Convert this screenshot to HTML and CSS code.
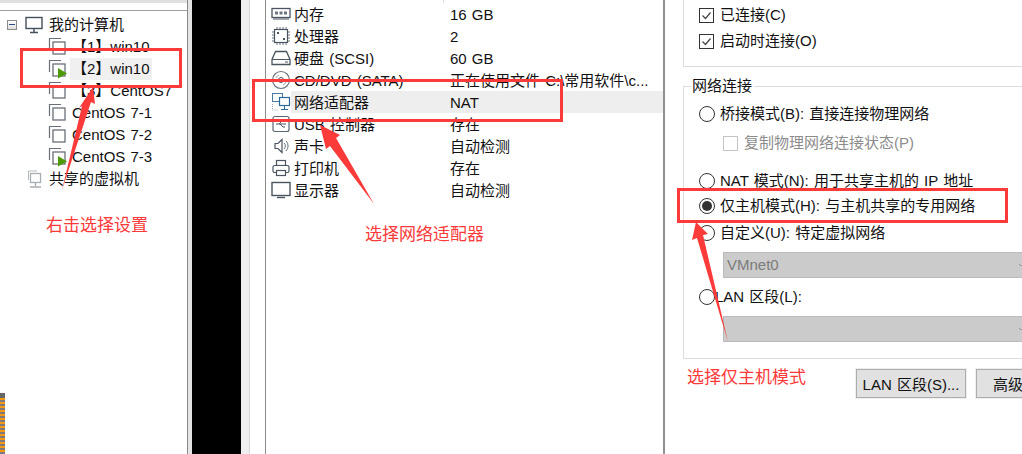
FILE: index.html
```html
<!DOCTYPE html>
<html lang="zh-CN">
<head>
    <meta charset="UTF-8">
    <title>虚拟机设置</title>
    <link rel="stylesheet" href="styles.css">
</head>
<body>
    <div class="page">
        <div class="library">
            <div class="library-top"></div>
            <ul class="tree">
                <li class="tree-row tree-root">
                    <span class="expander"></span>
                    <svg class="tree-icon" width="18" height="18" viewBox="0 0 18 18"><rect x="1" y="1.500" width="16" height="11" fill="#fff" stroke="#44505c" stroke-width="1.400"/><path d="M9 13v3M5 16.500h8" stroke="#44505c" stroke-width="1.400" fill="none"/></svg>
                    <span>我的计算机</span>
                </li>
                <li class="tree-row tree-vm">
                    <svg class="vm-icon" width="20" height="20" viewBox="0 0 20 20"><path d="M1.500 13V1.500H13" class="vm-back"/><rect x="5" y="5" width="12" height="12" class="vm-front"/></svg>
                    <span class="vm-name">【1】win10</span>
                </li>
                <li class="tree-row tree-vm">
                    <svg class="vm-icon" width="20" height="20" viewBox="0 0 20 20"><path d="M1.500 13V1.500H13" class="vm-back"/><rect x="5" y="5" width="12" height="12" class="vm-front"/><path d="M10 9l9 5.500-9 5z" fill="#4e9a06"/></svg>
                    <span class="vm-name vm-selected">【2】win10</span>
                </li>
                <li class="tree-row tree-vm">
                    <svg class="vm-icon" width="20" height="20" viewBox="0 0 20 20"><path d="M1.500 13V1.500H13" class="vm-back"/><rect x="5" y="5" width="12" height="12" class="vm-front"/></svg>
                    <span class="vm-name">【3】CentOS7</span>
                </li>
                <li class="tree-row tree-vm">
                    <svg class="vm-icon" width="20" height="20" viewBox="0 0 20 20"><path d="M1.500 13V1.500H13" class="vm-back"/><rect x="5" y="5" width="12" height="12" class="vm-front"/></svg>
                    <span class="vm-name">CentOS 7-1</span>
                </li>
                <li class="tree-row tree-vm">
                    <svg class="vm-icon" width="20" height="20" viewBox="0 0 20 20"><path d="M1.500 13V1.500H13" class="vm-back"/><rect x="5" y="5" width="12" height="12" class="vm-front"/></svg>
                    <span class="vm-name">CentOS 7-2</span>
                </li>
                <li class="tree-row tree-vm">
                    <svg class="vm-icon" width="20" height="20" viewBox="0 0 20 20"><path d="M1.500 13V1.500H13" class="vm-back"/><rect x="5" y="5" width="12" height="12" class="vm-front"/><path d="M10 9l9 5.500-9 5z" fill="#4e9a06"/></svg>
                    <span class="vm-name">CentOS 7-3</span>
                </li>
                <li class="tree-row tree-shared">
                    <svg class="tree-icon" width="16" height="18" viewBox="0 0 16 18"><path d="M1.500 10V1H10" fill="none" stroke="#b5b9bd"/><rect x="3.500" y="3.500" width="10" height="9" fill="#fff" stroke="#a8adb2" stroke-width="1.300"/><path d="M8.500 13v3M3 17h11" stroke="#a8adb2" stroke-width="1.300" fill="none"/></svg>
                    <span>共享的虚拟机</span>
                </li>
            </ul>
            <div class="taskbar-stub"></div>
        </div>

        <div class="black-gap"></div>

        <div class="devices">
            <div class="device-list">
                <div class="device-head"></div>
                <div class="device-row">
                    <svg class="device-icon" width="20" height="18" viewBox="0 0 20 18"><rect x="1" y="3.500" width="18" height="9" fill="#fff" stroke="#4a5560" stroke-width="1.300"/><path d="M4 6.500h3v3H4zM8.500 6.500h3v3h-3zM13 6.500h3v3h-3z" fill="#6a7580"/><path d="M2 14h16" stroke="#4a5560"/></svg>
                    <span class="device-name">内存</span><span class="device-value">16 GB</span>
                </div>
                <div class="device-row">
                    <svg class="device-icon" width="20" height="20" viewBox="0 0 20 20"><rect x="3.500" y="3.500" width="13" height="13" fill="#fff" stroke="#4a5560" stroke-width="1.200"/><path d="M6 1v2M9 1v2M12 1v2M15 1v2M6 17v2M9 17v2M12 17v2M15 17v2M1 6h2M1 9h2M1 12h2M1 15h2M17 6h2M17 9h2M17 12h2M17 15h2" stroke="#6a7580"/><rect x="6" y="6" width="2" height="2" fill="#4a5560"/><rect x="12" y="12" width="2" height="2" fill="#4a5560"/></svg>
                    <span class="device-name">处理器</span><span class="device-value">2</span>
                </div>
                <div class="device-row">
                    <svg class="device-icon" width="20" height="18" viewBox="0 0 20 18"><path d="M4.500 2.500h11l3.500 8v5H1v-5z" fill="#fff" stroke="#4a5560" stroke-width="1.300"/><path d="M1 10.500h18" stroke="#4a5560"/><path d="M14 13h3" stroke="#4a5560"/></svg>
                    <span class="device-name">硬盘 (SCSI)</span><span class="device-value">60 GB</span>
                </div>
                <div class="device-row">
                    <svg class="device-icon" width="20" height="20" viewBox="0 0 20 20"><circle cx="10" cy="10" r="8.500" fill="#fff" stroke="#6a7580" stroke-width="1.200"/><circle cx="10" cy="10" r="2.500" fill="none" stroke="#4a5560"/><path d="M5 8a5.500 5.500 0 0 1 3-3M15 12a5.500 5.500 0 0 1-3 3" stroke="#9aa2aa" fill="none"/></svg>
                    <span class="device-name">CD/DVD (SATA)</span><span class="device-value">正在使用文件 C:\常用软件\c...</span>
                </div>
                <div class="device-row device-selected">
                    <svg class="device-icon" width="20" height="20" viewBox="0 0 20 20"><rect x="1.500" y="1.500" width="10" height="8" fill="#fff" stroke="#4a7aa0"/><rect x="8.500" y="5.500" width="10" height="8" fill="#fff" stroke="#2a6a9a" stroke-width="1.200"/><path d="M13.500 14v3M10 17.500h7" stroke="#2a6a9a"/><path d="M1.500 12v6h6" stroke="#9aa2aa" stroke-dasharray="1 1" fill="none"/></svg>
                    <span class="device-name">网络适配器</span><span class="device-value">NAT</span>
                </div>
                <div class="device-row">
                    <svg class="device-icon" width="20" height="20" viewBox="0 0 20 20"><rect x="2" y="2.500" width="16" height="15" rx="2" fill="#fff" stroke="#5a6570" stroke-width="1.200"/><path d="M5 10h10M8 10l3-3h3M9 10l3 3h2" fill="none" stroke="#4a5560"/></svg>
                    <span class="device-name">USB 控制器</span><span class="device-value">存在</span>
                </div>
                <div class="device-row">
                    <svg class="device-icon" width="20" height="20" viewBox="0 0 20 20"><path d="M4 7.500h3l4-4v13l-4-4H4z" fill="#fff" stroke="#4a5560" stroke-width="1.200"/><path d="M13 7a4 4 0 0 1 0 6M15 5a7 7 0 0 1 0 10" stroke="#6a7580" fill="none"/></svg>
                    <span class="device-name">声卡</span><span class="device-value">自动检测</span>
                </div>
                <div class="device-row">
                    <svg class="device-icon" width="20" height="20" viewBox="0 0 20 20"><rect x="5.500" y="2.500" width="9" height="5" fill="#fff" stroke="#4a5560" stroke-width="1.200"/><rect x="2" y="7.500" width="16" height="7" rx="1.500" fill="#fff" stroke="#4a5560" stroke-width="1.200"/><rect x="5.500" y="12.500" width="9" height="5" fill="#fff" stroke="#4a5560" stroke-width="1.200"/></svg>
                    <span class="device-name">打印机</span><span class="device-value">存在</span>
                </div>
                <div class="device-row">
                    <svg class="device-icon" width="20" height="20" viewBox="0 0 20 20"><rect x="1" y="2.500" width="18" height="13" fill="#fff" stroke="#4a5560" stroke-width="1.400"/><path d="M6 17.500h8" stroke="#4a5560" stroke-width="1.400"/></svg>
                    <span class="device-name">显示器</span><span class="device-value">自动检测</span>
                </div>
            </div>
        </div>

        <div class="settings">
            <div class="status-box">
                <label class="check-row"><span class="checkbox"><svg width="13" height="13" viewBox="0 0 13 13"><path d="M2.500 6.500l3 3 5-6" fill="none" stroke="#444" stroke-width="1.200"/></svg></span>已连接(C)</label>
                <label class="check-row"><span class="checkbox"><svg width="13" height="13" viewBox="0 0 13 13"><path d="M2.500 6.500l3 3 5-6" fill="none" stroke="#444" stroke-width="1.200"/></svg></span>启动时连接(O)</label>
            </div>
            <fieldset class="network-box">
                <legend>网络连接</legend>
                <div class="radio-row"><span class="radio"></span>桥接模式(B): 直接连接物理网络</div>
                <div class="check-row sub-check"><span class="checkbox checkbox-off"></span>复制物理网络连接状态(P)</div>
                <div class="radio-row radio-nat"><span class="radio"></span>NAT 模式(N): 用于共享主机的 IP 地址</div>
                <div class="radio-row radio-host"><span class="radio radio-on"></span>仅主机模式(H): 与主机共享的专用网络</div>
                <div class="radio-row radio-custom"><span class="radio"></span>自定义(U): 特定虚拟网络</div>
                <div class="select-off">VMnet0<svg class="select-arrow" width="3" height="4" viewBox="0 0 3 4"><path d="M0 1l2 2 1-1" fill="none" stroke="#999"/></svg></div>
                <div class="radio-row radio-lan"><span class="radio"></span>LAN 区段(L):</div>
                <div class="select-off select-lan"><svg class="select-arrow" width="3" height="4" viewBox="0 0 3 4"><path d="M0 1l2 2 1-1" fill="none" stroke="#999"/></svg></div>
            </fieldset>
            <div class="button-row">
                <button class="btn">LAN 区段(S)...</button>
                <button class="btn btn-cut">高级</button>
            </div>
        </div>
    </div>

    <!-- annotations drawn on top of the screenshot -->
    <div class="mark mark-vm"></div>
    <div class="mark mark-net"></div>
    <div class="mark mark-host"></div>
    <svg class="arrows" width="1022" height="454" viewBox="0 0 1022 454">
        <path d="M62 190L82 106 79 108 93 87 95 104 91 102z" fill="#fb3a3a"/>
        <path d="M374 204L330 146 326 149 320 125 340 135 336 138z" fill="#fb3a3a"/>
        <path d="M728 342L697 238 692 240 696 222 708 234 703 235z" fill="#fb3a3a"/>
    </svg>
    <div class="note note-vm">右击选择设置</div>
    <div class="note note-net">选择网络适配器</div>
    <div class="note note-host">选择仅主机模式</div>
</body>
</html>
```

FILE: styles.css
```css
* {
    box-sizing: border-box;
}

html, body {
    margin: 0;
    padding: 0;
    height: 100%;
    overflow: hidden;
    background: #fff;
}

body {
    position: relative;
    width: 1022px;
    height: 454px;
    font-family: "Liberation Sans", "Noto Sans CJK SC", sans-serif;
    font-size: 15px;
    word-spacing: 1px;
    color: #111;
}

.page {
    display: flex;
    height: 454px;
    overflow: hidden;
}

/* left tree */
.library {
    flex: none;
    width: 192px;
    height: 454px;
    background: #fff;
    border-right: 4px solid #e4e4e4;
    box-shadow: inset -1px 0 0 #8a8a8a;
    display: flex;
    flex-direction: column;
    position: relative;
}

.library-top {
    height: 11px;
    margin-right: 1px;
    background: #fff;
    border-top: 3px solid #e0e0e0;
    border-bottom: 1px solid #a0a0a0;
}

.tree {
    list-style: none;
    margin: 3px 0 0;
    padding: 0;
}

.tree-row {
    display: flex;
    align-items: center;
    height: 22px;
    line-height: 20px;
    white-space: nowrap;
}

.tree-root {
    padding-left: 7px;
    padding-bottom: 1px;
}

.expander {
    width: 10px;
    height: 10px;
    border: 1px solid #8a8a8a;
    background: linear-gradient(#fff, #ddd);
    margin-right: 8px;
    position: relative;
}

.expander::after {
    content: "";
    position: absolute;
    left: 1px;
    right: 1px;
    top: 3px;
    height: 1px;
    background: #2a4a8a;
}

.tree-icon {
    margin-right: 6px;
    flex: none;
}

.tree-vm {
    padding-left: 48px;
}

.vm-icon {
    flex: none;
    margin-right: 2px;
}

.vm-back {
    fill: none;
    stroke: #6a7078;
    stroke-width: 1.2;
}

.vm-front {
    fill: #fff;
    stroke: #6a7078;
    stroke-width: 1.3;
}

.vm-name {
    padding: 0 2px;
    line-height: 22px;
    white-space: nowrap;
}

.vm-selected {
    background: #f0f0f0;
}

.tree-shared {
    padding-left: 27px;
    padding-bottom: 1px;
}

.taskbar-stub {
    position: absolute;
    left: 0;
    top: 393px;
    width: 5px;
    height: 61px;
    background: repeating-linear-gradient(#f59a10 0 2px, #7a7a80 2px 4px);
    border-top: 5px solid #666;
}

.black-gap {
    flex: none;
    width: 49px;
    background: #000;
}

/* device list */
.devices {
    flex: none;
    width: 424px;
    background: linear-gradient(to right, #f0f0f0 8px, #d8d8d8 8px 9px, #fff 9px);
    padding-left: 24px;
}

.device-list {
    height: 454px;
    border-left: 1px solid #8a8a8a;
    border-right: 2px solid #909090;
}

.device-head {
    height: 3px;
    width: 178px;
    border-right: 1px solid #ddd;
}

.device-row {
    display: flex;
    align-items: center;
    height: 22px;
    padding-left: 5px;
}

.device-icon {
    flex: none;
    margin-right: 3px;
}

.device-name {
    width: 156px;
    padding-top: 2px;
    line-height: 22px;
    white-space: nowrap;
}

.device-value {
    padding-top: 2px;
    line-height: 22px;
    white-space: nowrap;
}

.device-selected {
    background: linear-gradient(#eee, #eee) 25px 0 / 100% 100% no-repeat;
}

/* right settings */
.settings {
    flex: none;
    width: 357px;
    padding-left: 18px;
    position: relative;
}

.status-box {
    height: 67px;
    border: 1px solid #dcdcdc;
    border-top: none;
    border-right: none;
    padding: 2px 0 0 15px;
}

.check-row {
    display: flex;
    align-items: center;
    height: 26px;
    line-height: 20px;
    white-space: nowrap;
}

.checkbox {
    width: 15px;
    height: 15px;
    border: 1px solid #333;
    margin-right: 6px;
    display: flex;
    align-items: center;
    justify-content: center;
    flex: none;
}

.checkbox-off {
    border-color: #c4c4c4;
}

.network-box {
    margin: 10px 0 0;
    padding: 7px 0 0 15px;
    height: 282px;
    border: 1px solid #dcdcdc;
    border-right: none;
    min-width: 0;
}

.network-box legend {
    padding: 0 2px 0 1px;
    margin-left: -8px;
    line-height: 18px;
}

.radio-row {
    display: flex;
    align-items: center;
    height: 24px;
    line-height: 20px;
    white-space: nowrap;
}

.radio {
    width: 16px;
    height: 16px;
    border: 1px solid #333;
    border-radius: 50%;
    background: #fff;
    margin-right: 5px;
    flex: none;
    position: relative;
}

.radio-on::after {
    content: "";
    position: absolute;
    inset: 2px;
    border-radius: 50%;
    background: #333;
}

.sub-check {
    padding-left: 24px;
    margin-top: 3px;
    color: #8c8c8c;
    height: 28px;
}

.radio-nat {
    margin-top: 12px;
}

.radio-host {
    margin-top: 1px;
}

.radio-custom {
    margin-top: 3px;
}

.radio-lan {
    margin-top: 6px;
    height: 26px;
}

.radio-lan .radio {
    margin-right: 0;
}

.select-off {
    margin: 7px 0 0 24px;
    height: 26px;
    background: #cbcbcb;
    border: 1px solid #bbb;
    border-right: none;
    color: #7c7c7c;
    padding-left: 3px;
    line-height: 24px;
    position: relative;
}

.select-lan {
    margin-top: 6px;
}

.select-arrow {
    position: absolute;
    right: 0;
    top: 10px;
}

.button-row {
    display: flex;
    gap: 10px;
    margin-top: 10px;
    padding-left: 173px;
}

.btn {
    flex: none;
    width: 110px;
    height: 29px;
    padding: 0;
    background: #e1e1e1;
    border: 1px solid #adadad;
    outline: 1px solid #eee;
    font: inherit;
    word-spacing: inherit;
    color: #111;
    white-space: nowrap;
}

.btn-cut {
    width: 46px;
    padding-left: 16px;
    text-align: left;
    border-right: none;
}

/* annotation layer */
.mark {
    position: absolute;
    border: 3px solid #fb3a3a;
}

.mark-vm {
    left: 20px;
    top: 48px;
    width: 162px;
    height: 40px;
}

.mark-net {
    left: 252px;
    top: 79px;
    width: 311px;
    height: 43px;
}

.mark-host {
    left: 677px;
    top: 188px;
    width: 331px;
    height: 35px;
}

.arrows {
    position: absolute;
    left: 0;
    top: 0;
}

.note {
    position: absolute;
    color: #fb3a3a;
    font-size: 17px;
    line-height: 20px;
    white-space: nowrap;
}

.note-vm {
    left: 46px;
    top: 216px;
}

.note-net {
    left: 365px;
    top: 225px;
}

.note-host {
    left: 687px;
    top: 368px;
}
```
